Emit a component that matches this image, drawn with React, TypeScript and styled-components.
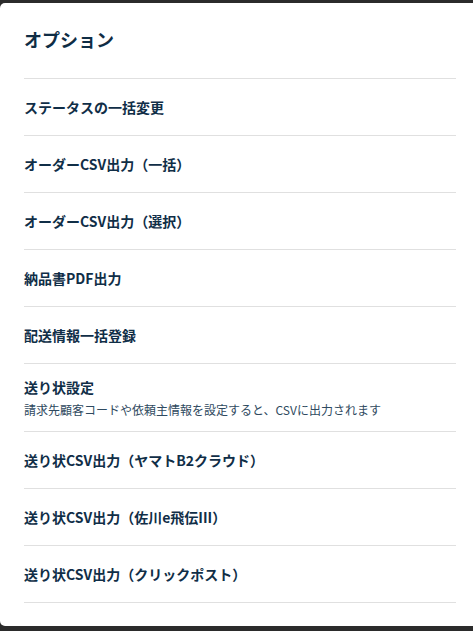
import { FC } from 'react';
import styled, { createGlobalStyle } from 'styled-components';

const GlobalStyle = createGlobalStyle`
    html, body {
        margin: 0;
        padding: 0;
        background-color: #2b2b2b;
        overflow: hidden;
    }
    body {
        font-family: "Noto Sans CJK JP", "Noto Sans", sans-serif;
        color: #123049;
    }
`;

const Backdrop = styled.div`
    width: 100%;
    height: 631px;
    padding-top: 3px;
    box-sizing: border-box;
`;

const ModalCard = styled.div`
    width: 477px;
    height: 623px;
    background-color: #ffffff;
    border-radius: 5px;
    padding: 0 21px 0 24px;
    box-sizing: border-box;
`;

const ModalHeader = styled.h2`
    margin: 0;
    padding: 24px 0 27px;
    font-size: 18px;
    line-height: 24px;
    font-weight: 700;
    color: #0f2d45;
    border-bottom: 1px solid #e0e0e0;
`;

const OptionList = styled.ul`
    list-style: none;
    margin: 0;
    padding: 0;
`;

interface OptionRowProps {
    $hasNote: boolean;
}

const OptionRow = styled.li<OptionRowProps>`
    display: flex;
    flex-direction: column;
    justify-content: center;
    gap: 6px;
    box-sizing: border-box;
    height: ${(props) => (props.$hasNote ? '68px' : '57px')};
    padding: ${(props) => (props.$hasNote ? '1px 0 0' : '0')};
    border-bottom: 1px solid #e0e0e0;
    cursor: pointer;
`;

const OptionLabel = styled.span`
    font-size: 14px;
    line-height: 18px;
    font-weight: 700;
    color: #102e47;
    white-space: nowrap;
`;

const OptionNote = styled.span`
    font-size: 12px;
    line-height: 16px;
    color: #2f4a60;
    white-space: nowrap;
`;

interface OptionItem {
    id: string;
    label: string;
    note?: string;
}

const options: OptionItem[] = [
    { id: 'status', label: 'ステータスの一括変更' },
    { id: 'csv-all', label: 'オーダーCSV出力（一括）' },
    { id: 'csv-selected', label: 'オーダーCSV出力（選択）' },
    { id: 'delivery-pdf', label: '納品書PDF出力' },
    { id: 'shipping-bulk', label: '配送情報一括登録' },
    {
        id: 'invoice-settings',
        label: '送り状設定',
        note: '請求先顧客コードや依頼主情報を設定すると、CSVに出力されます',
    },
    { id: 'yamato', label: '送り状CSV出力（ヤマトB2クラウド）' },
    { id: 'sagawa', label: '送り状CSV出力（佐川e飛伝III）' },
    { id: 'clickpost', label: '送り状CSV出力（クリックポスト）' },
];

const OptionEntry: FC<OptionItem> = ({ label, note }) => (
    <OptionRow $hasNote={!!note}>
        <OptionLabel>{label}</OptionLabel>
        {note && <OptionNote>{note}</OptionNote>}
    </OptionRow>
);

const App: FC = () => (
    <>
        <GlobalStyle />
        <Backdrop>
            <ModalCard>
                <ModalHeader>オプション</ModalHeader>
                <OptionList>
                    {options.map((option) => (
                        <OptionEntry key={option.id} {...option} />
                    ))}
                </OptionList>
            </ModalCard>
        </Backdrop>
    </>
);

export default App;
